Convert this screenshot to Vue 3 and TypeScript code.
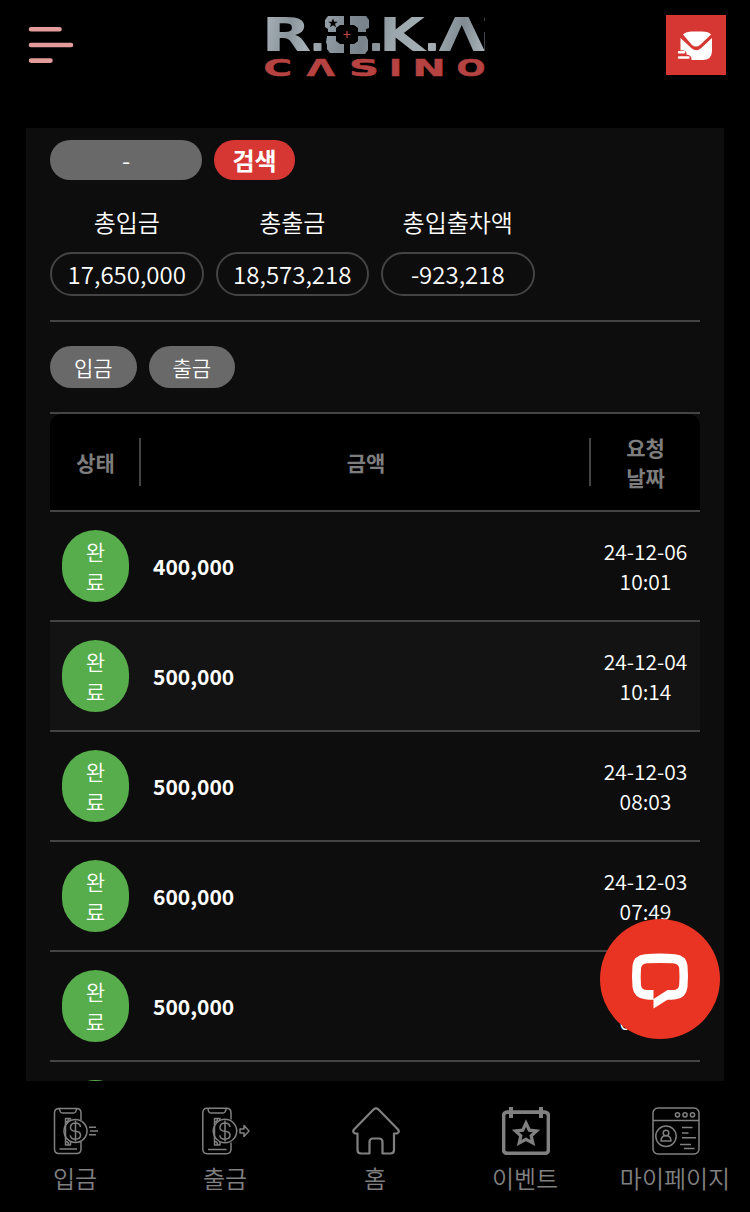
<script setup lang="ts">
interface Total {
  label: string
  value: string
}
interface Entry {
  amount: string
  date: string
  time: string
  active?: boolean
}

const totals: Total[] = [
  { label: '총입금', value: '17,650,000' },
  { label: '총출금', value: '18,573,218' },
  { label: '총입출차액', value: '-923,218' },
]

const entries: Entry[] = [
  { amount: '400,000', date: '24-12-06', time: '10:01' },
  { amount: '500,000', date: '24-12-04', time: '10:14', active: true },
  { amount: '500,000', date: '24-12-03', time: '08:03' },
  { amount: '600,000', date: '24-12-03', time: '07:49' },
  { amount: '500,000', date: '24-12-03', time: '07:12' },
  { amount: '500,000', date: '24-12-02', time: '09:20' },
]
</script>

<template>
  <div class="app">
    <header class="header">
      <svg class="menu" width="48" height="40" viewBox="0 0 48 40">
        <g stroke="#e39c9b" stroke-width="4.6" stroke-linecap="round">
          <path d="M5 4.3H33.500M5 20H45M5 35.600H24.500" />
        </g>
      </svg>

      <svg class="logo" width="222" height="66" viewBox="264 14 222 66">
        <defs>
          <linearGradient id="steel" x1="264" y1="16" x2="486" y2="54" gradientUnits="userSpaceOnUse">
            <stop offset="0" stop-color="#a9b2b8" />
            <stop offset="0.12" stop-color="#89949b" />
            <stop offset="0.2" stop-color="#a7b0b7" />
            <stop offset="0.33" stop-color="#88929a" />
            <stop offset="0.45" stop-color="#77828a" />
            <stop offset="0.58" stop-color="#9ca6ad" />
            <stop offset="0.75" stop-color="#a5afb6" />
            <stop offset="0.88" stop-color="#7f8a92" />
            <stop offset="1" stop-color="#b0b9bf" />
          </linearGradient>
        </defs>
        <g class="logo-top" fill="url(#steel)">
          <text x="261.500" y="51" textLength="50" lengthAdjust="spacingAndGlyphs">R</text>
          <text x="379" y="51" textLength="46" lengthAdjust="spacingAndGlyphs">K</text>
          <text x="438.500" y="51" textLength="46.500" lengthAdjust="spacingAndGlyphs">Λ</text>
        </g>
        <g fill="url(#steel)">
          <rect x="313.500" y="43" width="8" height="8" rx="1" />
          <rect x="372" y="43" width="8" height="8" rx="1" />
          <rect x="428" y="43" width="8" height="8" rx="1" />
          <path d="M328 16h16v9h-4l-4 3v4h-8v-3l-3-2v-7zM350 16h16l3 4v8l-3 1v3h-8v-4l-4-3h-4zM327 36h9v5l4 3h4v9h-14l-3-4v-4l-1-3zM358 36h8l2 4v10l-3 4h-15v-10h4l4-3z" />
        </g>
        <path fill="#000" d="M333 18.500l1.300 3.300h3.500l-2.800 2 1 3.500-3-2.100-3 2.100 1-3.500-2.800-2h3.500z" />
        <path d="M347 31v7M343.500 34.500h7" stroke="#c94340" stroke-width="1.200" />
        <path d="M484.500 18v3M484.500 32v19" stroke="#56616a" stroke-width="0.700" />
        <g class="logo-bottom" fill="#b64341" stroke="#b64341" stroke-width="0.500">
          <text x="263.500" y="76" textLength="28.500" lengthAdjust="spacingAndGlyphs">C</text>
          <text x="306.500" y="76" textLength="28.500" lengthAdjust="spacingAndGlyphs">Λ</text>
          <text x="349" y="76" textLength="30" lengthAdjust="spacingAndGlyphs">S</text>
          <text x="389" y="76" textLength="13" lengthAdjust="spacingAndGlyphs">I</text>
          <text x="412.500" y="76" textLength="33" lengthAdjust="spacingAndGlyphs">N</text>
          <text x="456.500" y="76" textLength="29" lengthAdjust="spacingAndGlyphs">O</text>
        </g>
      </svg>

      <button class="mail" type="button">
        <svg width="60" height="60" viewBox="0 0 60 60">
          <path fill="#fff" d="M17 19.500Q20 16.700 26 16.500h10q7 0 9 3L34 30q-4 3-8 0z" />
          <path fill="#fff" d="M14.500 23l11 10.300q5 4 9.500 0L46 23v13.500q-.5 8.500-9 8.500H25.500q.5-5-5-5.500.5-4-4-4.300H14.500z" />
          <path d="M13 37.200h5M13 42.500h9.500" stroke="#fff" stroke-width="2.400" stroke-linecap="round" />
        </svg>
      </button>
    </header>

    <main class="panel">
      <div class="search">
        <div class="range">-</div>
        <button class="go" type="button">검색</button>
      </div>

      <div class="totals">
        <div v-for="t in totals" :key="t.label" class="total">
          <div class="total-label">{{ t.label }}</div>
          <div class="total-value">{{ t.value }}</div>
        </div>
      </div>

      <div class="tabs">
        <button class="tab" type="button">입금</button>
        <button class="tab" type="button">출금</button>
      </div>

      <section class="table">
        <div class="row head">
          <div class="cell divided">상태</div>
          <div class="cell divided">금액</div>
          <div class="cell">요청<br />날짜</div>
        </div>
        <div v-for="(e, i) in entries" :key="i" class="row item" :class="{ active: e.active }">
          <div class="cell"><span class="badge">완<br />료</span></div>
          <div class="cell amount">{{ e.amount }}</div>
          <div class="cell date">{{ e.date }}<br />{{ e.time }}</div>
        </div>
      </section>
    </main>

    <nav class="nav">
      <a class="nav-item">
        <svg width="48" height="48" viewBox="0 0 48 48" class="thin">
          <path d="M29 13V6q0-4.500-4.500-4.500H7Q2.500 1.500 2.500 6v36q0 4.500 4.500 4.500h17.500q4.500 0 4.500-4.500v-7M7.500 2q.5 4 3 4h11q2.500 0 3-4M7.500 42h17.500M18.500 13.500V11.500H13.500v26.500h5v-3M13.500 15q3 0 3-3M13.500 34.500q3 0 3 3" />
          <circle cx="23.500" cy="24" r="11.500" />
          <path d="M28.500 20q-.5-4-5-4t-5 4 5 4.200q5 .3 5 4t-5 4q-5 0-5.200-4M23.500 13.500v21" />
          <path d="M37 20.200h7M38 24h8M37 27.800h7" />
        </svg>
        <span>입금</span>
      </a>
      <a class="nav-item">
        <svg width="50" height="48" viewBox="0 0 50 48" class="thin">
          <path d="M30 12.500V6q0-4.700-4.500-4.700H6Q1.800 1.300 1.800 6v36q0 4.700 4.500 4.700h19.200q4.500 0 4.500-4.700v-6.500M7 2q.5 4 3 4h12q2.500 0 3-4M7 42.500h18.500M19 13.500V11.500H13.500v26.500h5.500v-3M13.500 15q3 0 3-3M13.500 34.500q3 0 3 3" />
          <circle cx="24" cy="24" r="11.700" />
          <path d="M29 20q-.5-4-5-4t-5 4 5 4.200q5 .3 5 4t-5 4q-5 0-5.200-4M24 13.500v21M39 22h4v-3.500l5 5.500-5 5.500V26h-4z" />
        </svg>
        <span>출금</span>
      </a>
      <a class="nav-item">
        <svg width="50" height="48" viewBox="0 0 50 48">
          <path class="line" stroke-width="2.200" d="M18.500 46.500H10q-3.500 0-3.500-3.500V26.500H4Q1 25 3 22.500L22.500 2.500q2.500-2.200 5 0L47 22.500q2 2.500-1 4h-3V43q0 3.500-3.500 3.500H31.500V35q0-3.500-3.500-3.500h-6q-3.500 0-3.500 3.500z" />
        </svg>
        <span>홈</span>
      </a>
      <a class="nav-item">
        <svg width="48" height="48" viewBox="0 0 48 48">
          <rect class="line" x="1.600" y="5.100" width="44.800" height="41.300" rx="3.500" stroke-width="3.600" />
          <path class="line" stroke-width="4" d="M9 0v11M39 0v11" />
          <path class="line miter" stroke-width="3.200" d="M24 16l3.300 7.200 7.200.7-5.300 4.900 1.600 7.200-6.800-3.700-6.800 3.700 1.600-7.200-5.300-4.900 7.200-.7z" />
        </svg>
        <span>이벤트</span>
      </a>
      <a class="nav-item">
        <svg width="50" height="48" viewBox="0 0 50 48" class="thin">
          <rect x="2" y="1" width="46" height="46" rx="5" />
          <path d="M2 13.500h46" />
          <circle cx="26.500" cy="7.800" r="2.100" />
          <circle cx="34" cy="7.800" r="2.100" />
          <circle cx="41.500" cy="7.800" r="2.100" />
          <circle cx="15" cy="29.300" r="10.200" />
          <circle cx="15" cy="26" r="2.800" />
          <path d="M10 34q.3-4.500 3.300-5.200h3.400q3 .7 3.300 5.200zM31 20.500h10.500M31 26h6.500M31 30.800h14M29 37.500h11M33 41.500h10.500" />
        </svg>
        <span>마이페이지</span>
      </a>
    </nav>

    <button class="chat" type="button">
      <svg width="60" height="60" viewBox="0 0 60 60">
        <path fill="#fff" fill-rule="evenodd" d="M15 4.300Q30 2.500 45 4.300q11 1 12.500 11 1 11 0 22Q56 48 46 49.300q-4.500.5-8.500.5L23.500 58.500V49.800q-4.500 0-8.500-.5Q4 48 2.500 37.300q-1-11 0-22Q4 5.300 15 4.300zM17 13.300q-5.500.5-6 5-.6 8 0 17 .5 4.500 6 4.800h6.500v9L37.500 40.100H43q5.700-.3 6.200-4.800.6-8.500 0-17-.5-4.500-6.200-5-13-.8-26 0z" />
      </svg>
    </button>
  </div>
</template>

<style>
body {
  background: #000;
  overflow: hidden;
}
</style>

<style scoped>
.app {
  position: relative;
  display: flex;
  flex-direction: column;
  width: 750px;
  height: 1212px;
  overflow: hidden;
  background: #000;
  color: #fff;
  font-family: 'Noto Sans CJK KR', 'Noto Sans', sans-serif;
  font-weight: 350;
}
.app * {
  box-sizing: border-box;
}
button {
  border: 0;
  padding: 0;
  color: inherit;
  font-family: inherit;
  font-weight: inherit;
}
svg {
  display: block;
}
.header {
  flex: none;
  display: flex;
  justify-content: space-between;
  align-items: flex-start;
  height: 128px;
  padding: 14px 24px 0 26px;
}
.menu {
  margin-top: 11px;
}
.logo {
  margin-left: 10px;
  overflow: visible;
}
.logo-top {
  font: 700 45.500px 'DejaVu Sans', sans-serif;
}
.logo-bottom {
  font: 700 23.500px 'DejaVu Sans', sans-serif;
}
.mail {
  width: 60px;
  height: 60px;
  margin-top: 1px;
  background: #d73733;
}
.panel {
  flex: none;
  height: 953px;
  margin: 0 26px;
  padding: 12px 24px 0;
  overflow: hidden;
  background: #0d0d0d;
}
.search {
  display: flex;
  gap: 12px;
}
.range,
.go {
  height: 40px;
  border-radius: 20px;
  text-align: center;
  line-height: 40px;
}
.range {
  width: 152px;
  background: #696969;
  font-size: 24px;
}
.go {
  width: 81px;
  background: #d73733;
  font-size: 24px;
  font-weight: 700;
}
.totals {
  display: flex;
  gap: 12px;
  padding: 24px 0;
  border-bottom: 2px solid #444;
}
.total {
  width: 153.500px;
  text-align: center;
  font-size: 24px;
}
.total-label {
  height: 48px;
  line-height: 36px;
}
.total-value {
  height: 44px;
  border: 2px solid #444;
  border-radius: 22px;
  line-height: 40px;
}
.tabs {
  display: flex;
  gap: 12px;
  padding: 24px 0;
}
.tab {
  width: 86.500px;
  height: 42px;
  border-radius: 21px;
  background: #696969;
  font-size: 21px;
  line-height: 41px;
}
.table {
  border-top: 2px solid #444;
}
.row {
  display: grid;
  grid-template-columns: 91px 450px 109px;
  align-items: center;
  border-bottom: 2px solid #444;
  font-size: 21px;
  line-height: 30px;
}
.head {
  height: 98px;
  border-radius: 12px 12px 0 0;
  background: #000;
  color: #7d7d7d;
  font-weight: 700;
  text-align: center;
}
.divided {
  height: 48px;
  padding-left: 2px;
  border-right: 2px solid #444;
  line-height: 48px;
}
.item {
  height: 110px;
}
.item.active {
  background: #131313;
}
.badge {
  display: block;
  width: 67px;
  height: 72px;
  margin: 0 auto;
  padding-top: 6px;
  border-radius: 33.500px;
  background: #57ad4b;
  text-align: center;
}
.amount {
  padding-left: 12px;
  font-weight: 700;
}
.date {
  text-align: center;
}
.nav {
  flex: none;
  display: grid;
  grid-template-columns: repeat(5, 150px);
  height: 131px;
  padding-top: 26px;
  color: #808080;
}
.nav-item {
  display: flex;
  flex-direction: column;
  align-items: center;
  font-size: 24px;
  line-height: 36px;
  white-space: nowrap;
}
.nav-item svg {
  margin-left: 2px;
}
.nav-item span {
  margin-top: 5px;
}
.thin,
.line {
  fill: none;
  stroke: #808080;
  stroke-linejoin: round;
}
.thin {
  stroke-width: 1.500;
}
.miter {
  stroke-linejoin: miter;
}
.chat {
  position: absolute;
  left: 600px;
  top: 919px;
  width: 120px;
  height: 120px;
  padding: 31px 30px;
  border-radius: 50%;
  background: #e93423;
}
</style>
